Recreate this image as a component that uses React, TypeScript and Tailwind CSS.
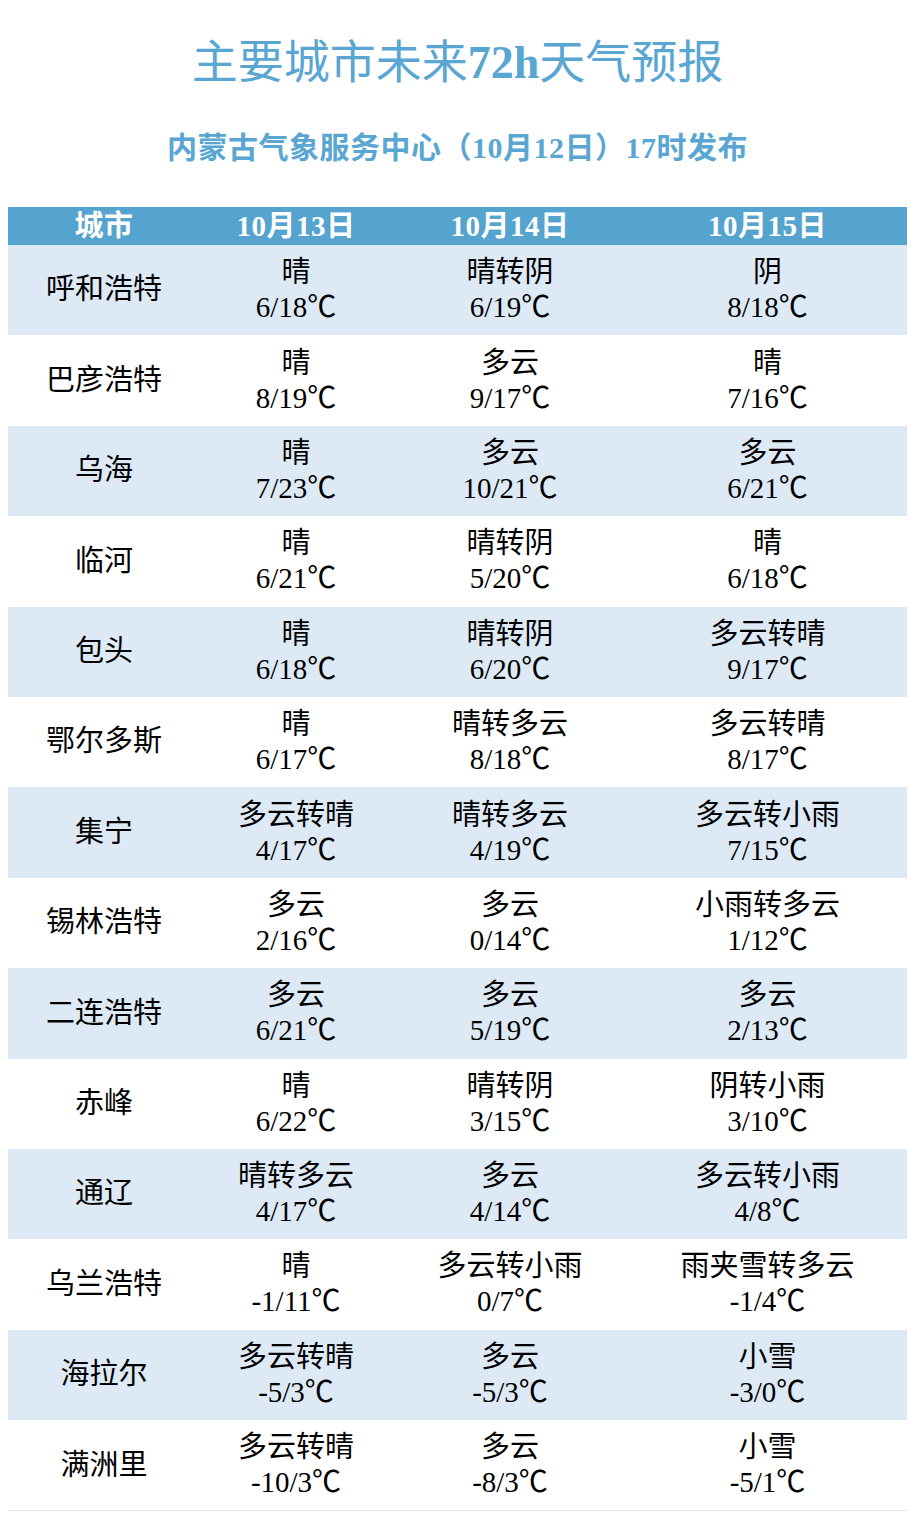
const rows: [string, string, string, string, string, string, string][] = [
  ["呼和浩特", "晴", "6/18℃", "晴转阴", "6/19℃", "阴", "8/18℃"],
  ["巴彦浩特", "晴", "8/19℃", "多云", "9/17℃", "晴", "7/16℃"],
  ["乌海", "晴", "7/23℃", "多云", "10/21℃", "多云", "6/21℃"],
  ["临河", "晴", "6/21℃", "晴转阴", "5/20℃", "晴", "6/18℃"],
  ["包头", "晴", "6/18℃", "晴转阴", "6/20℃", "多云转晴", "9/17℃"],
  ["鄂尔多斯", "晴", "6/17℃", "晴转多云", "8/18℃", "多云转晴", "8/17℃"],
  ["集宁", "多云转晴", "4/17℃", "晴转多云", "4/19℃", "多云转小雨", "7/15℃"],
  ["锡林浩特", "多云", "2/16℃", "多云", "0/14℃", "小雨转多云", "1/12℃"],
  ["二连浩特", "多云", "6/21℃", "多云", "5/19℃", "多云", "2/13℃"],
  ["赤峰", "晴", "6/22℃", "晴转阴", "3/15℃", "阴转小雨", "3/10℃"],
  ["通辽", "晴转多云", "4/17℃", "多云", "4/14℃", "多云转小雨", "4/8℃"],
  ["乌兰浩特", "晴", "-1/11℃", "多云转小雨", "0/7℃", "雨夹雪转多云", "-1/4℃"],
  ["海拉尔", "多云转晴", "-5/3℃", "多云", "-5/3℃", "小雪", "-3/0℃"],
  ["满洲里", "多云转晴", "-10/3℃", "多云", "-8/3℃", "小雪", "-5/1℃"],
];

const font = "font-['Liberation_Serif','Noto_Sans_CJK_SC',serif]";
const cols = "grid grid-cols-[192px_192px_236px_279px]";

function Cell({ weather, temp }: { weather: string; temp: string }) {
  return (
    <div className="flex flex-col items-center justify-center text-[29px] leading-[35px] text-black">
      <span>{weather}</span>
      <span>{temp}</span>
    </div>
  );
}

export default function App() {
  return (
    <div className={`w-[915px] bg-white ${font}`}>
      <h1 className="pt-[36px] text-center text-[46px] leading-[54px] text-[#5aa6d2]">
        主要城市未来<span className="font-bold">72h</span>天气预报
      </h1>
      <p className="mt-[38px] text-center text-[30px] leading-[40px] font-bold tracking-[0.5px] text-[#5aa6d2]">
        内蒙古气象服务中心（10月12日）17时发布
      </p>
      <div className="mx-[8px] mt-[39px] mb-[9px] border-b border-[#e3e3e3]">
        <div className={`${cols} h-[38px] items-center bg-[#55a3cf] text-center text-[29px] leading-[38px] font-bold tracking-[0.5px] text-white`}>
          <span>城市</span>
          <span>10月13日</span>
          <span>10月14日</span>
          <span>10月15日</span>
        </div>
        {rows.map((r, i) => (
          <div
            key={r[0]}
            className={`${cols} h-[90.4px] ${i % 2 === 0 ? "bg-[#ddeaf6]" : "bg-white"}`}
          >
            <div className="flex items-center justify-center text-[29px] text-black">{r[0]}</div>
            <Cell weather={r[1]} temp={r[2]} />
            <Cell weather={r[3]} temp={r[4]} />
            <Cell weather={r[5]} temp={r[6]} />
          </div>
        ))}
      </div>
    </div>
  );
}
